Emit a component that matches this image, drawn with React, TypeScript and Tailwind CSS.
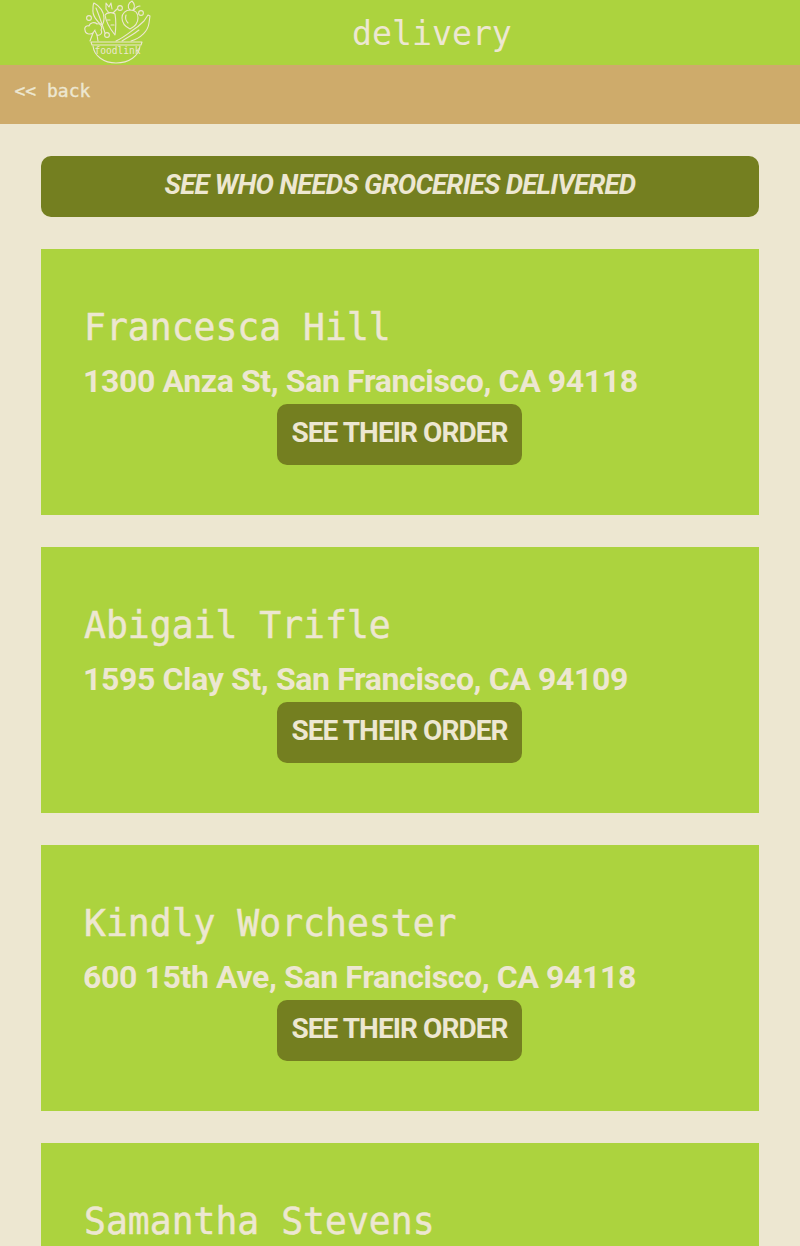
const people = [
  { name: "Francesca Hill", address: "1300 Anza St, San Francisco, CA 94118" },
  { name: "Abigail Trifle", address: "1595 Clay St, San Francisco, CA 94109" },
  { name: "Kindly Worchester", address: "600 15th Ave, San Francisco, CA 94118" },
  { name: "Samantha Stevens" },
];

function Logo() {
  return (
    <svg width="68" height="65" viewBox="84 0 68 65" fill="none" stroke="#ede7d1" strokeWidth="1.1" strokeLinecap="round" strokeLinejoin="round" className="block">
      {/* bowl */}
      <path d="M91 42 H142 L141 45 H92 Z" />
      <path d="M93 46 C94 56 104 63 116 63 C129 63 139 56 140 46" />
      {/* broccoli */}
      <path d="M90 41 L93 33 C90 35 85 34 85 30 C84 27 87 25 89 26 C90 22 95 22 97 24 C100 23 103 27 101 30 C103 33 100 36 97 35 L98 41" />
      <path d="M93 33 L95 30 M97 35 L95 31" />
      {/* leaf */}
      <path d="M94 3 C100 6 104 12 104 18 C104 22 103 24 102 25 C97 22 92 15 93 9 C93 6 93 4 94 3 Z" />
      <path d="M96 8 C99 15 102 24 105 33" />
      {/* carrot */}
      <path d="M105 15 C107 12 112 12 115 14 C116 20 116 28 115 35 C111 30 106 22 105 15 Z" />
      <path d="M109 13 L106 9 L106 3 L109 7 L111 3 L112 9 M113 13 L117 9" />
      <path d="M107 20 H110 M111 25 H114" />
      {/* radish */}
      <path d="M130 10 C135 10 138 13 138 18 C138 23 134 27 130 29 C126 27 122 23 122 18 C122 13 126 10 130 10 Z" />
      <path d="M130 10 C127 7 128 3 132 1 C135 4 135 7 133 10 M134 10 C136 7 138 6 140 6" />
      <path d="M126 15 C125 18 126 21 128 23" />
      {/* eggplant */}
      <path d="M116 41 C123 38 129 33 133 30 C138 27 141 24 144 21 L148 15 L150 16 L149 23 C148 31 141 38 131 41" />
      <path d="M122 41 C128 37 134 34 139 30" />
      {/* dots */}
      <circle cx="89" cy="18" r="2.4" />
      <circle cx="107" cy="35" r="2.4" />
      <circle cx="120" cy="8" r="2.4" />
      <circle cx="141" cy="13" r="2.4" />
      <text x="117.5" y="54" textAnchor="middle" fill="#ede7d1" stroke="none" fontSize="9.6" fontFamily="'DejaVu Sans Mono', monospace">foodlink</text>
    </svg>
  );
}

export default function App() {
  return (
    <div className="h-[1246px] overflow-hidden bg-[#ede7d1] text-[#ede7d1] font-['Roboto',sans-serif]">
      <header className="h-[65px] bg-[#acd33e] flex items-center">
        <div className="ml-[84px] w-[68px]"><Logo /></div>
        <h1 className="ml-[200px] text-[33.2px] leading-none font-normal pt-[2px] font-['DejaVu_Sans_Mono',monospace]">delivery</h1>
      </header>
      <div className="h-[59px] bg-[#ceab6b] flex items-center pl-[14.5px] pb-[8px] text-[18px] font-['DejaVu_Sans_Mono',monospace] [-webkit-text-stroke:0.4px_#ede7d1]">
        &lt;&lt; back
      </div>
      <main className="px-[41px] pt-[32px] flex flex-col gap-[32px]">
        <div className="h-[61px] rounded-[10px] bg-[#747f20] flex items-center justify-center pb-[3px] text-[27.5px] tracking-[-0.75px] italic font-bold">
          SEE WHO NEEDS GROCERIES DELIVERED
        </div>
        {people.map((p) => (
          <section key={p.name} className="h-[266px] shrink-0 bg-[#acd33e] px-[43px] pt-[57px]">
            <h2 className="text-[36.4px] leading-[44px] font-normal font-['DejaVu_Sans_Mono',monospace] [-webkit-text-stroke:0.5px_#ede7d1]">{p.name}</h2>
            {p.address && (
              <>
                <p className="text-[32px] leading-[44px] font-bold tracking-[-0.37px] mt-[9px] -ml-[1px] whitespace-nowrap">{p.address}</p>
                <div className="flex justify-center mt-[1px]">
                  <button className="h-[61px] w-[245px] -ml-[1px] rounded-[10px] bg-[#747f20] text-[28px] tracking-[-0.93px] font-bold pb-[4px]">SEE THEIR ORDER</button>
                </div>
              </>
            )}
          </section>
        ))}
      </main>
    </div>
  );
}
